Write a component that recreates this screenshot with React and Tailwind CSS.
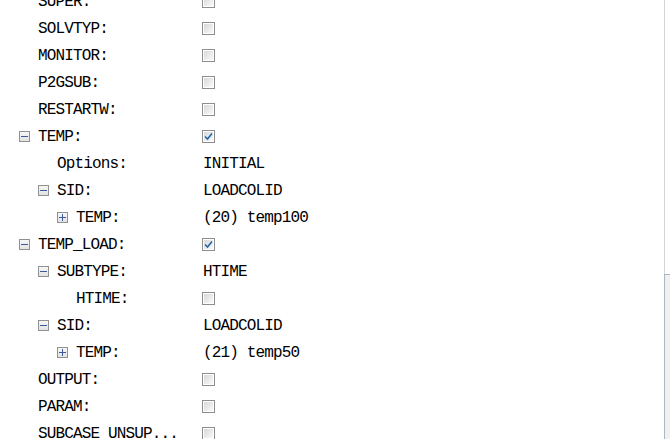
import React from 'react';

const rows = [
  { label: 'SUPER:', level: 0, check: false },
  { label: 'SOLVTYP:', level: 0, check: false },
  { label: 'MONITOR:', level: 0, check: false },
  { label: 'P2GSUB:', level: 0, check: false },
  { label: 'RESTARTW:', level: 0, check: false },
  { label: 'TEMP:', level: 0, toggle: 'minus', check: true },
  { label: 'Options:', level: 1, value: 'INITIAL' },
  { label: 'SID:', level: 1, toggle: 'minus', value: 'LOADCOLID' },
  { label: 'TEMP:', level: 2, toggle: 'plus', value: '(20) temp100' },
  { label: 'TEMP_LOAD:', level: 0, toggle: 'minus', check: true },
  { label: 'SUBTYPE:', level: 1, toggle: 'minus', value: 'HTIME' },
  { label: 'HTIME:', level: 2, check: false },
  { label: 'SID:', level: 1, toggle: 'minus', value: 'LOADCOLID' },
  { label: 'TEMP:', level: 2, toggle: 'plus', value: '(21) temp50' },
  { label: 'OUTPUT:', level: 0, check: false },
  { label: 'PARAM:', level: 0, check: false },
  { label: 'SUBCASE UNSUP...', level: 0, check: false },
];

const pad = ['pl-[19px]', 'pl-[38px]', 'pl-[57px]'];

function Toggle({ kind }) {
  return (
    <span className="w-[11px] h-[11px] border border-[#919191] bg-gradient-to-b from-[#f7f7f7] to-[#e2e2e2] flex items-center justify-center shrink-0">
      <svg width="9" height="9" viewBox="0 0 9 9">
        <path d="M1 4.5h7" stroke="#3a5a9c" strokeWidth="1" />
        {kind === 'plus' && <path d="M4.5 1v7" stroke="#3a5a9c" strokeWidth="1" />}
      </svg>
    </span>
  );
}

function Check({ on }) {
  return (
    <span className="w-[13px] h-[13px] border border-[#8e8e8e] bg-white p-px flex shrink-0">
      <span className="flex-1 bg-gradient-to-br from-[#d8d8d8] to-[#fafafa] flex items-center justify-center">
        {on && (
          <svg width="9" height="9" viewBox="0 0 9 9">
            <path d="M1 4.5 L3.5 7 L8 1.5" stroke="#2267a8" strokeWidth="1.6" fill="none" />
          </svg>
        )}
      </span>
    </span>
  );
}

export default function App() {
  return (
    <div className="w-[670px] h-[439px] overflow-hidden bg-white flex font-['Liberation_Mono',monospace] text-[16px] tracking-[-0.85px] text-black">
      <div className="flex-1 flex flex-col -mt-[12px]">
        {rows.map((r, i) => (
          <div key={i} className="h-[27px] flex items-center shrink-0">
            <div className={`w-[202px] flex items-center ${pad[r.level]}`}>
              <span className="w-[19px] flex shrink-0">{r.toggle && <Toggle kind={r.toggle} />}</span>
              <span className="whitespace-pre">{r.label}</span>
            </div>
            {r.value ? <span className="whitespace-pre pl-px">{r.value}</span> : <Check on={r.check} />}
          </div>
        ))}
      </div>
      <div className="w-[6px] flex flex-col border-l border-[#d4d4d4]">
        <div className="h-[274px]" />
        <div className="flex-1 bg-[#f0f0f0] border-t border-[#a9b7c6] -ml-px border-l border-l-[#a9b7c6]" />
      </div>
    </div>
  );
}
